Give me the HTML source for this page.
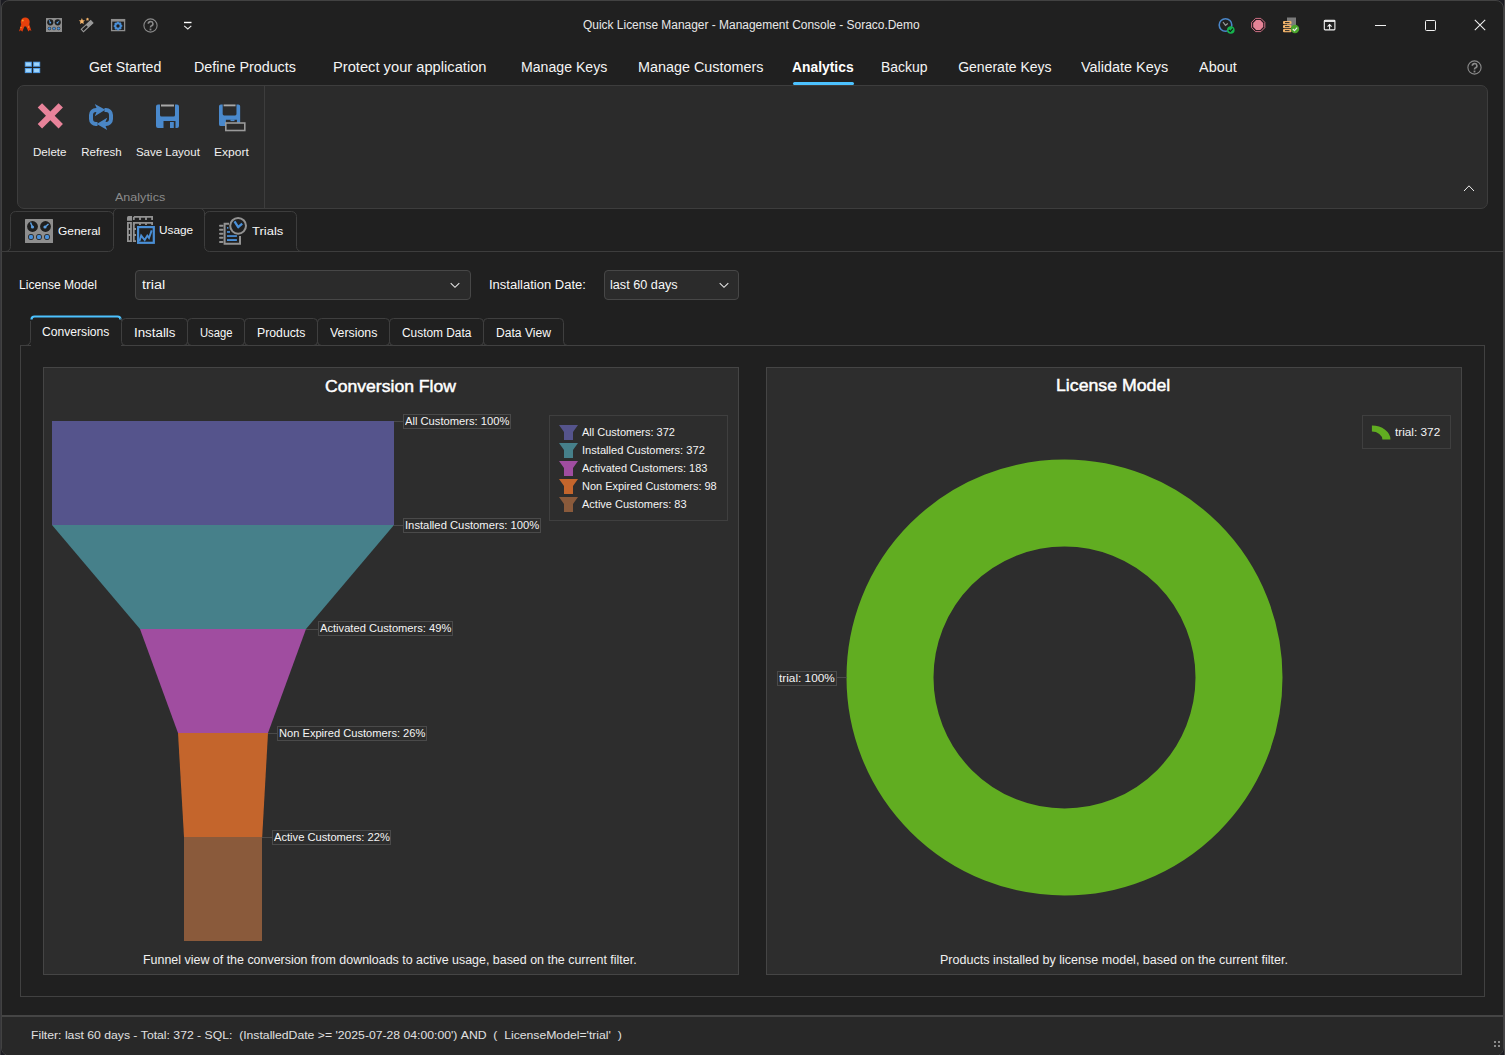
<!DOCTYPE html><html><head><meta charset="utf-8"><style>
html,body{margin:0;padding:0;background:#1c1c22;width:1505px;height:1055px;overflow:hidden;position:relative;}
.t{position:absolute;white-space:pre;font-family:"Liberation Sans",sans-serif;transform-origin:0 0;}
svg{overflow:visible}
</style></head><body>
<div style="position:absolute;left:0px;top:0px;width:1px;height:1055px;box-sizing:border-box;background:#38383b;"></div>
<div style="position:absolute;left:1504px;top:0px;width:1px;height:1055px;box-sizing:border-box;background:#464446;"></div>
<div style="position:absolute;left:1px;top:0px;width:1503px;height:1056px;box-sizing:border-box;border:1px solid #424242;border-radius:8px;background:#202020;"></div>
<div class="t" style="left:583.2px;top:18.94px;font-size:12px;line-height:12px;color:#e8e8e8;transform:scaleX(0.9954);">Quick&#160;License&#160;Manager&#160;-&#160;Management&#160;Console&#160;-&#160;Soraco.Demo</div>
<div class="t" style="left:89.2px;top:60.05px;font-size:14px;line-height:14px;color:#f4f4f4;transform:scaleX(1.0099);">Get&#160;Started</div>
<div class="t" style="left:194.4px;top:60.05px;font-size:14px;line-height:14px;color:#f4f4f4;transform:scaleX(1.0230);">Define&#160;Products</div>
<div class="t" style="left:333.1px;top:60.05px;font-size:14px;line-height:14px;color:#f4f4f4;transform:scaleX(1.0492);">Protect&#160;your&#160;application</div>
<div class="t" style="left:521.3px;top:60.05px;font-size:14px;line-height:14px;color:#f4f4f4;transform:scaleX(1.0081);">Manage&#160;Keys</div>
<div class="t" style="left:638.2px;top:60.05px;font-size:14px;line-height:14px;color:#f4f4f4;transform:scaleX(1.0273);">Manage&#160;Customers</div>
<div class="t" style="left:881.4px;top:60.05px;font-size:14px;line-height:14px;color:#f4f4f4;transform:scaleX(0.9958);">Backup</div>
<div class="t" style="left:958.2px;top:60.05px;font-size:14px;line-height:14px;color:#f4f4f4;">Generate&#160;Keys</div>
<div class="t" style="left:1081.3px;top:60.05px;font-size:14px;line-height:14px;color:#f4f4f4;transform:scaleX(1.0311);">Validate&#160;Keys</div>
<div class="t" style="left:1199px;top:60.05px;font-size:14px;line-height:14px;color:#f4f4f4;transform:scaleX(1.0332);">About</div>
<div class="t" style="left:792.4px;top:60.05px;font-size:14px;line-height:14px;color:#ffffff;font-weight:bold;transform:scaleX(0.9896);">Analytics</div>
<div style="position:absolute;left:793px;top:82px;width:61px;height:3px;box-sizing:border-box;background:#4cc2ff;border-radius:2px;"></div>
<div style="position:absolute;left:17px;top:85px;width:1471px;height:124px;box-sizing:border-box;border:1px solid #3d3d3d;border-radius:7px;background:#2b2b2b;"></div>
<div style="position:absolute;left:264px;top:86px;width:1px;height:122px;box-sizing:border-box;background:#3d3d3d;"></div>
<div class="t" style="left:33.3px;top:147.27px;font-size:11.5px;line-height:11.5px;color:#f0f0f0;transform:scaleX(1.0077);">Delete</div>
<div class="t" style="left:81.3px;top:147.27px;font-size:11.5px;line-height:11.5px;color:#f0f0f0;">Refresh</div>
<div class="t" style="left:135.9px;top:147.27px;font-size:11.5px;line-height:11.5px;color:#f0f0f0;">Save&#160;Layout</div>
<div class="t" style="left:214.3px;top:147.27px;font-size:11.5px;line-height:11.5px;color:#f0f0f0;transform:scaleX(1.0500);">Export</div>
<div class="t" style="left:115.2px;top:192.19px;font-size:11px;line-height:11px;color:#8a8a8a;transform:scaleX(1.1405);">Analytics</div>
<svg style="position:absolute;left:0px;top:200px" width="1505" height="60" viewBox="0 0 1505 60"><g transform="translate(0,-200)" fill="none" stroke="#3d3d3d" stroke-width="1"><path d="M1,251.5 H108.5 M209.5,251.5 H1503"/><path d="M5.5,251.5 A5,5 0 0 0 10.5,246.5 V216.5 A5,5 0 0 1 15.5,211.5 H108.5 A5,5 0 0 1 113.5,216.5 V246.5 A5,5 0 0 1 108.5,251.5"/><path d="M113.5,216.5 V213 A4.5,4.5 0 0 1 118,208.5 H200 A4.5,4.5 0 0 1 204.5,213 V216.5"/><path d="M209.5,251.5 A5,5 0 0 1 204.5,246.5 V216.5 A5,5 0 0 1 209.5,211.5 H291.5 A5,5 0 0 1 296.5,216.5 V246.5 A5,5 0 0 0 301.5,251.5"/></g></svg>
<div class="t" style="left:57.8px;top:226.27px;font-size:11.5px;line-height:11.5px;color:#f8f8f8;transform:scaleX(1.0388);">General</div>
<div class="t" style="left:159.2px;top:225.27px;font-size:11.5px;line-height:11.5px;color:#f8f8f8;transform:scaleX(1.0288);">Usage</div>
<div class="t" style="left:252.2px;top:226.27px;font-size:11.5px;line-height:11.5px;color:#f8f8f8;transform:scaleX(1.1306);">Trials</div>
<div class="t" style="left:19.3px;top:279.14px;font-size:12px;line-height:12px;color:#f8f8f8;transform:scaleX(1.0067);">License&#160;Model</div>
<div style="position:absolute;left:135px;top:270px;width:336px;height:30px;box-sizing:border-box;border:1px solid #474747;border-radius:4px;background:#2b2b2b;"></div>
<div class="t" style="left:141.9px;top:279.14px;font-size:12px;line-height:12px;color:#f8f8f8;transform:scaleX(1.2050);">trial</div>
<div class="t" style="left:488.7px;top:279.14px;font-size:12px;line-height:12px;color:#f8f8f8;transform:scaleX(1.0841);">Installation&#160;Date:</div>
<div style="position:absolute;left:604px;top:270px;width:135px;height:30px;box-sizing:border-box;border:1px solid #474747;border-radius:4px;background:#2b2b2b;"></div>
<div class="t" style="left:610.3px;top:279.14px;font-size:12px;line-height:12px;color:#f8f8f8;transform:scaleX(1.0556);">last&#160;60&#160;days</div>
<div style="position:absolute;left:20px;top:345px;width:1465px;height:652px;box-sizing:border-box;border:1px solid #414141;background:#202020;"></div>
<div style="position:absolute;left:31px;top:344px;width:90px;height:3px;box-sizing:border-box;background:#202020;"></div>
<svg style="position:absolute;left:0px;top:300px" width="600" height="60" viewBox="0 0 600 60"><g transform="translate(0,-300)" fill="none" stroke="#3f3f3f" stroke-width="1"><path d="M121.5,341.5 V322.5 A4,4 0 0 1 125.5,318.5 H183.5 A4,4 0 0 1 187.5,322.5 V341.5 M187.5,341.5 V322.5 A4,4 0 0 1 191.5,318.5 H240.5 A4,4 0 0 1 244.5,322.5 V341.5 M244.5,341.5 V322.5 A4,4 0 0 1 248.5,318.5 H313.5 A4,4 0 0 1 317.5,322.5 V341.5 M317.5,341.5 V322.5 A4,4 0 0 1 321.5,318.5 H385.5 A4,4 0 0 1 389.5,322.5 V341.5 M389.5,341.5 V322.5 A4,4 0 0 1 393.5,318.5 H479.5 A4,4 0 0 1 483.5,322.5 V341.5 M483.5,341.5 V322.5 A4,4 0 0 1 487.5,318.5 H559.5 A4,4 0 0 1 563.5,322.5 V341.5 M183.5,345.5 A4,4 0 0 0 187.5,341.5 A4,4 0 0 0 191.5,345.5 M240.5,345.5 A4,4 0 0 0 244.5,341.5 A4,4 0 0 0 248.5,345.5 M313.5,345.5 A4,4 0 0 0 317.5,341.5 A4,4 0 0 0 321.5,345.5 M385.5,345.5 A4,4 0 0 0 389.5,341.5 A4,4 0 0 0 393.5,345.5 M479.5,345.5 A4,4 0 0 0 483.5,341.5 A4,4 0 0 0 487.5,345.5 M121.5,341.5 A4,4 0 0 0 125.5,345.5 M563.5,341.5 A4,4 0 0 0 567.5,345.5"/><path d="M20,345.5 H25.5 A5,5 0 0 0 30.5,340.5 V321"/></g><g transform="translate(0,-300)"><path d="M31.5,319.5 A3,3 0 0 1 34.5,316.5 H117.5 A3,3 0 0 1 120.5,319.5" fill="none" stroke="#4cc2ff" stroke-width="2.2"/><path d="M120.5,318.5 A3,3 0 0 1 121.5,321" fill="none" stroke="#3f3f3f" stroke-width="1"/></g></svg>
<div class="t" style="left:42.3px;top:325.94px;font-size:12px;line-height:12px;color:#f8f8f8;transform:scaleX(1.0105);">Conversions</div>
<div class="t" style="left:134.2px;top:326.64px;font-size:12px;line-height:12px;color:#f8f8f8;transform:scaleX(1.1112);">Installs</div>
<div class="t" style="left:200.4px;top:326.64px;font-size:12px;line-height:12px;color:#f8f8f8;transform:scaleX(0.9369);">Usage</div>
<div class="t" style="left:257.2px;top:326.64px;font-size:12px;line-height:12px;color:#f8f8f8;transform:scaleX(1.0220);">Products</div>
<div class="t" style="left:329.9px;top:326.64px;font-size:12px;line-height:12px;color:#f8f8f8;transform:scaleX(1.0298);">Versions</div>
<div class="t" style="left:402px;top:326.64px;font-size:12px;line-height:12px;color:#f8f8f8;transform:scaleX(0.9911);">Custom&#160;Data</div>
<div class="t" style="left:496.3px;top:326.64px;font-size:12px;line-height:12px;color:#f8f8f8;transform:scaleX(1.0078);">Data&#160;View</div>
<div style="position:absolute;left:43px;top:367px;width:696px;height:608px;box-sizing:border-box;border:1px solid #454545;background:#2d2d2d;"></div>
<div style="position:absolute;left:766px;top:367px;width:696px;height:608px;box-sizing:border-box;border:1px solid #454545;background:#2d2d2d;"></div>
<div class="t" style="left:325px;top:378.23px;font-size:16.5px;line-height:16.5px;color:#ffffff;transform:scaleX(1.0660);-webkit-text-stroke:0.45px #ffffff;">Conversion&#160;Flow</div>
<div class="t" style="left:1056px;top:377.23px;font-size:16.5px;line-height:16.5px;color:#ffffff;transform:scaleX(1.0733);-webkit-text-stroke:0.45px #ffffff;">License&#160;Model</div>
<svg style="position:absolute;left:43px;top:367px" width="696" height="608" viewBox="0 0 696 608">
<g transform="translate(-43,-367)">
<rect x="52" y="421" width="342" height="104" fill="#55548c"/>
<polygon points="52,525 394,525 306,629 140,629" fill="#46808a"/>
<polygon points="140,629 306,629 268,733 178,733" fill="#a04da0"/>
<polygon points="178,733 268,733 262.2,837 184,837" fill="#c4652c"/>
<rect x="184" y="837" width="78" height="104" fill="#8a5a3b"/>
</g></svg>
<div style="position:absolute;left:403px;top:413.5px;width:108px;height:15.0px;box-sizing:border-box;border:1px solid #4a4a4a;"></div>
<div style="position:absolute;left:394px;top:421px;width:9px;height:1px;box-sizing:border-box;background:#4a4a4a;"></div>
<div class="t" style="left:405.3px;top:415.73px;font-size:11.3px;line-height:11.3px;color:#f4f4f4;transform:scaleX(0.9895);">All&#160;Customers:&#160;100%</div>
<div style="position:absolute;left:403px;top:517.5px;width:138px;height:15.0px;box-sizing:border-box;border:1px solid #4a4a4a;"></div>
<div style="position:absolute;left:394px;top:525px;width:9px;height:1px;box-sizing:border-box;background:#4a4a4a;"></div>
<div class="t" style="left:405.3px;top:519.73px;font-size:11.3px;line-height:11.3px;color:#f4f4f4;transform:scaleX(0.9953);">Installed&#160;Customers:&#160;100%</div>
<div style="position:absolute;left:318px;top:621px;width:135px;height:15px;box-sizing:border-box;border:1px solid #4a4a4a;"></div>
<div style="position:absolute;left:306px;top:629px;width:12px;height:1px;box-sizing:border-box;background:#4a4a4a;"></div>
<div class="t" style="left:320.3px;top:623.23px;font-size:11.3px;line-height:11.3px;color:#f4f4f4;transform:scaleX(0.9869);">Activated&#160;Customers:&#160;49%</div>
<div style="position:absolute;left:277px;top:725.5px;width:150px;height:15.0px;box-sizing:border-box;border:1px solid #4a4a4a;"></div>
<div style="position:absolute;left:268px;top:733px;width:9px;height:1px;box-sizing:border-box;background:#4a4a4a;"></div>
<div class="t" style="left:279.3px;top:727.73px;font-size:11.3px;line-height:11.3px;color:#f4f4f4;transform:scaleX(0.9835);">Non&#160;Expired&#160;Customers:&#160;26%</div>
<div style="position:absolute;left:271.5px;top:829.5px;width:119.5px;height:15.0px;box-sizing:border-box;border:1px solid #4a4a4a;"></div>
<div style="position:absolute;left:262px;top:837px;width:9.5px;height:1px;box-sizing:border-box;background:#4a4a4a;"></div>
<div class="t" style="left:273.8px;top:831.73px;font-size:11.3px;line-height:11.3px;color:#f4f4f4;transform:scaleX(0.9869);">Active&#160;Customers:&#160;22%</div>
<div style="position:absolute;left:549px;top:415px;width:179px;height:106px;box-sizing:border-box;border:1px solid #3f3f3f;"></div>
<svg style="position:absolute;left:559px;top:425px" width="19" height="15" viewBox="0 0 19 15"><path d="M0,0 H19 L14,7 V15 H5 V7 Z" fill="#55548c"/></svg>
<div class="t" style="left:582px;top:426.59px;font-size:11px;line-height:11px;color:#f4f4f4;">All&#160;Customers:&#160;372</div>
<svg style="position:absolute;left:559px;top:443px" width="19" height="15" viewBox="0 0 19 15"><path d="M0,0 H19 L14,7 V15 H5 V7 Z" fill="#46808a"/></svg>
<div class="t" style="left:582px;top:444.59px;font-size:11px;line-height:11px;color:#f4f4f4;transform:scaleX(1.0093);">Installed&#160;Customers:&#160;372</div>
<svg style="position:absolute;left:559px;top:461px" width="19" height="15" viewBox="0 0 19 15"><path d="M0,0 H19 L14,7 V15 H5 V7 Z" fill="#a04da0"/></svg>
<div class="t" style="left:582px;top:462.59px;font-size:11px;line-height:11px;color:#f4f4f4;transform:scaleX(0.9956);">Activated&#160;Customers:&#160;183</div>
<svg style="position:absolute;left:559px;top:479px" width="19" height="15" viewBox="0 0 19 15"><path d="M0,0 H19 L14,7 V15 H5 V7 Z" fill="#c4652c"/></svg>
<div class="t" style="left:582px;top:480.59px;font-size:11px;line-height:11px;color:#f4f4f4;transform:scaleX(0.9969);">Non&#160;Expired&#160;Customers:&#160;98</div>
<svg style="position:absolute;left:559px;top:497px" width="19" height="15" viewBox="0 0 19 15"><path d="M0,0 H19 L14,7 V15 H5 V7 Z" fill="#8a5a3b"/></svg>
<div class="t" style="left:582px;top:498.59px;font-size:11px;line-height:11px;color:#f4f4f4;">Active&#160;Customers:&#160;83</div>
<svg style="position:absolute;left:766px;top:367px" width="696" height="608" viewBox="0 0 696 608"><circle cx="298.5" cy="310.5" r="174.5" fill="none" stroke="#61ad21" stroke-width="87"/></svg>
<div style="position:absolute;left:776.5px;top:670.5px;width:60px;height:15px;box-sizing:border-box;border:1px solid #4a4a4a;"></div>
<div style="position:absolute;left:836.5px;top:677px;width:10px;height:1px;box-sizing:border-box;background:#4a4a4a;"></div>
<div class="t" style="left:779px;top:673.03px;font-size:11.3px;line-height:11.3px;color:#f4f4f4;transform:scaleX(1.0452);">trial:&#160;100%</div>
<div style="position:absolute;left:1362px;top:415px;width:88.5px;height:34px;box-sizing:border-box;border:1px solid #3f3f3f;"></div>
<svg style="position:absolute;left:1371px;top:425px" width="21" height="16" viewBox="0 0 21 16"><path d="M0.9,0.6 A18.6,14 0 0 1 19.5,14.6 L11.4,14.6 A10.5,8.1 0 0 0 0.9,6.6 Z" fill="#61ad21"/></svg>
<div class="t" style="left:1394.8px;top:427.47px;font-size:11.5px;line-height:11.5px;color:#f4f4f4;transform:scaleX(1.0247);">trial:&#160;372</div>
<div class="t" style="left:143.2px;top:954.34px;font-size:12px;line-height:12px;color:#f0f0f0;transform:scaleX(1.0364);">Funnel&#160;view&#160;of&#160;the&#160;conversion&#160;from&#160;downloads&#160;to&#160;active&#160;usage,&#160;based&#160;on&#160;the&#160;current&#160;filter.</div>
<div class="t" style="left:939.6px;top:954.04px;font-size:12px;line-height:12px;color:#f0f0f0;transform:scaleX(1.0452);">Products&#160;installed&#160;by&#160;license&#160;model,&#160;based&#160;on&#160;the&#160;current&#160;filter.</div>
<svg style="position:absolute;left:17px;top:16px" width="16" height="17" viewBox="0 0 16 17"><g transform="translate(-17,-16)"><polygon points="21.3,24 24.8,25.5 22.3,31.8 20.8,30.3 19,31.5" fill="#e53c0b"/><polygon points="29.2,24 25.7,25.5 28.4,31.5 29.8,30 31.4,31" fill="#e53c0b"/><circle cx="25.2" cy="22" r="4.5" fill="#e8400c"/><circle cx="22.8" cy="20.5" r="0.9" fill="#f7a030"/><circle cx="21" cy="27.5" r="0.7" fill="#f7a030"/><circle cx="28.5" cy="27" r="0.7" fill="#f7a030"/></g></svg>
<svg style="position:absolute;left:46px;top:18px" width="16" height="14" viewBox="0 0 16 14"><g transform="scale(0.5714,0.5833)"><rect x="0" y="0" width="28" height="24" rx="0.5" fill="#8e8e8e"/><circle cx="7.5" cy="7.5" r="5.4" fill="#1e1e1e"/><circle cx="20.5" cy="7.5" r="5.4" fill="#1e1e1e"/><path d="M5.5,3.5 L7.5,8" stroke="#5a9ee0" stroke-width="1.5"/><circle cx="7.5" cy="8" r="1.6" fill="#5a9ee0"/><path d="M23.5,5 L20,8" stroke="#5a9ee0" stroke-width="1.5"/><circle cx="20" cy="8" r="1.6" fill="#5a9ee0"/><circle cx="6" cy="18" r="2.9" fill="#1e1e1e"/><circle cx="14" cy="18" r="2.9" fill="#1e1e1e"/><circle cx="22" cy="18" r="2.9" fill="#1e1e1e"/><circle cx="6" cy="18" r="2.2" fill="#4a90d9"/><circle cx="14" cy="18" r="2.2" fill="#4a90d9"/><circle cx="22" cy="18" r="2.2" fill="#4a90d9"/></g></svg>
<svg style="position:absolute;left:70px;top:12px" width="30" height="26" viewBox="0 0 30 26"><g transform="translate(-70,-12)"><polygon points="81.90,18.10 82.78,20.19 85.04,20.38 83.33,21.86 83.84,24.07 81.90,22.90 79.96,24.07 80.47,21.86 78.76,20.38 81.02,20.19" fill="#f5b56c"/><polygon points="87.50,17.40 88.03,18.57 89.31,18.71 88.36,19.58 88.62,20.84 87.50,20.20 86.38,20.84 86.64,19.58 85.69,18.71 86.97,18.57" fill="#f5b56c"/><g transform="rotate(-43 87 26)"><rect x="80.5" y="24.5" width="13" height="3.3" fill="none" stroke="#9a9a9a" stroke-width="1"/><rect x="87" y="24.5" width="6.5" height="3.3" fill="#9a9a9a"/></g></g></svg>
<svg style="position:absolute;left:105px;top:12px" width="26" height="26" viewBox="0 0 26 26"><g transform="translate(-105,-12)"><rect x="111.6" y="19.6" width="13" height="11" fill="none" stroke="#8e8e8e" stroke-width="1.3"/><rect x="111" y="19" width="14" height="2.6" fill="#8e8e8e"/><g transform="translate(118,26)"><circle r="2.7" fill="none" stroke="#4a90d9" stroke-width="2"/><rect x="-0.9" y="-4.3" width="1.6" height="1.8" transform="rotate(0)" fill="#4a90d9"/><rect x="-0.9" y="-4.3" width="1.6" height="1.8" transform="rotate(45)" fill="#4a90d9"/><rect x="-0.9" y="-4.3" width="1.6" height="1.8" transform="rotate(90)" fill="#4a90d9"/><rect x="-0.9" y="-4.3" width="1.6" height="1.8" transform="rotate(135)" fill="#4a90d9"/><rect x="-0.9" y="-4.3" width="1.6" height="1.8" transform="rotate(180)" fill="#4a90d9"/><rect x="-0.9" y="-4.3" width="1.6" height="1.8" transform="rotate(225)" fill="#4a90d9"/><rect x="-0.9" y="-4.3" width="1.6" height="1.8" transform="rotate(270)" fill="#4a90d9"/><rect x="-0.9" y="-4.3" width="1.6" height="1.8" transform="rotate(315)" fill="#4a90d9"/></g></g></svg>
<svg style="position:absolute;left:142.5px;top:17.5px" width="15" height="15" viewBox="0 0 15 15"><circle cx="7.5" cy="7.5" r="6.6" fill="none" stroke="#8a8a8a" stroke-width="1.1"/><path d="M5.3,5.8 A2.3,2.2 0 1 1 8.2,7.9 C7.5,8.3 7.5,8.7 7.5,9.6" fill="none" stroke="#8a8a8a" stroke-width="1.6"/><rect x="6.6" y="10.6" width="1.8" height="1.8" fill="#8a8a8a"/></svg>
<svg style="position:absolute;left:183px;top:21px" width="10" height="9" viewBox="0 0 10 9"><rect x="1" y="0.8" width="7.5" height="1.4" fill="#ffffff"/><path d="M1.2,4.8 L4.8,8 L8.3,4.8" fill="none" stroke="#e8e8e8" stroke-width="1.1"/></svg>
<svg style="position:absolute;left:1218px;top:17px" width="19" height="17" viewBox="0 0 19 17"><circle cx="7.5" cy="8" r="6.3" fill="none" stroke="#4a86c8" stroke-width="1.6"/><path d="M5,5 L7.5,8.3 L9.8,6.5" fill="none" stroke="#9a9a9a" stroke-width="1.2"/><circle cx="12.8" cy="13" r="3.8" fill="#16b24e"/><path d="M10.8,13 L12.3,14.5 L14.9,11.6" fill="none" stroke="#111" stroke-width="1.1"/></svg>
<svg style="position:absolute;left:1250px;top:17px" width="17" height="17" viewBox="0 0 17 17"><polygon points="5.5,1.4 10.9,1.4 14.8,5.3 14.8,10.7 10.9,14.6 5.5,14.6 1.6,10.7 1.6,5.3" fill="#2a1a20" stroke="#e07a8f" stroke-width="0.9"/><polygon points="6.1,3 10.3,3 13.2,5.9 13.2,10.1 10.3,13 6.1,13 3.2,10.1 3.2,5.9" fill="#e68497"/></svg>
<svg style="position:absolute;left:1282px;top:17px" width="18" height="17" viewBox="0 0 18 17"><rect x="5" y="0.5" width="9" height="10" fill="#7a7a7a"/><rect x="1" y="4" width="8.5" height="3.2" rx="1" fill="#f2b36a"/><rect x="1" y="8" width="8.5" height="3.2" rx="1" fill="#f2b36a"/><rect x="1" y="12" width="8.5" height="3.2" rx="1" fill="#f2b36a"/><rect x="3" y="5.1" width="4.5" height="1" fill="#2a2a2a"/><rect x="3" y="9.1" width="4.5" height="1" fill="#2a2a2a"/><rect x="3" y="13.1" width="4.5" height="1" fill="#2a2a2a"/><circle cx="13" cy="12" r="4.2" fill="#4aa52c"/><path d="M10.8,12 L12.5,13.7 L15.2,10.6" fill="none" stroke="#eaeaea" stroke-width="1.2"/></svg>
<svg style="position:absolute;left:1323px;top:19px" width="13" height="12" viewBox="0 0 13 12"><rect x="1.3" y="1.3" width="10.6" height="9.6" rx="0.8" fill="none" stroke="#f4f4f4" stroke-width="1.1"/><rect x="1.3" y="1.3" width="10.6" height="1.6" fill="#f4f4f4"/><path d="M6.6,10.5 V5.6 M4.6,7.6 L6.6,5.6 L8.6,7.6" fill="none" stroke="#f4f4f4" stroke-width="1.05"/></svg>
<div style="position:absolute;left:1374.5px;top:25px;width:11px;height:1px;box-sizing:border-box;background:#f0f0f0;"></div>
<div style="position:absolute;left:1425px;top:20px;width:10.5px;height:10.5px;box-sizing:border-box;border:1px solid #f0f0f0;border-radius:1.5px;"></div>
<svg style="position:absolute;left:1474px;top:19px" width="12" height="12" viewBox="0 0 12 12"><path d="M0.8,0.8 L11.2,11.2 M11.2,0.8 L0.8,11.2" stroke="#f0f0f0" stroke-width="1.05"/></svg>
<svg style="position:absolute;left:24px;top:61px" width="18" height="13" viewBox="0 0 18 13"><rect x="0.8" y="0.7" width="7.1" height="5.1" fill="#4f9be6"/><rect x="1.8" y="1.6" width="5.1" height="3.2" fill="#9ed4fb"/><rect x="9.1" y="0.7" width="7.1" height="5.1" fill="#4f9be6"/><rect x="10.1" y="1.6" width="5.1" height="3.2" fill="#9ed4fb"/><rect x="0.8" y="7.0" width="7.1" height="5.1" fill="#4f9be6"/><rect x="1.8" y="7.9" width="5.1" height="3.2" fill="#9ed4fb"/><rect x="9.1" y="7.0" width="7.1" height="5.1" fill="#4f9be6"/><rect x="10.1" y="7.9" width="5.1" height="3.2" fill="#9ed4fb"/></svg>
<svg style="position:absolute;left:1466.5px;top:59.6px" width="15" height="15" viewBox="0 0 15 15"><circle cx="7.5" cy="7.5" r="6.6" fill="none" stroke="#8a8a8a" stroke-width="1.1"/><path d="M5.3,5.8 A2.3,2.2 0 1 1 8.2,7.9 C7.5,8.3 7.5,8.7 7.5,9.6" fill="none" stroke="#8a8a8a" stroke-width="1.6"/><rect x="6.6" y="10.6" width="1.8" height="1.8" fill="#8a8a8a"/></svg>
<svg style="position:absolute;left:37.8px;top:103.3px" width="26" height="26" viewBox="0 0 26 26"><path d="M4,0.5 L12.5,9 L21,0.5 L25.5,5 L17,13.5 L25.5,22 L21,26.5 L12.5,18 L4,26.5 L-0.5,22 L8,13.5 L-0.5,5 Z" fill="#e8839a" transform="translate(0.2,-0.3) scale(0.97)"/></svg>
<svg style="position:absolute;left:88px;top:103px" width="26" height="28" viewBox="0 0 26 28"><path d="M10,7 H8 A5,5 0 0 0 3,12 V16 A5,5 0 0 0 8,21 H9.5" fill="none" stroke="#4a86c5" stroke-width="4"/><path d="M16,21 H18 A5,5 0 0 0 23,16 V12 A5,5 0 0 0 18,7 H16.5" fill="none" stroke="#4a86c5" stroke-width="4"/><polygon points="6.8,1 17.3,6.8 6.8,13.3 9.3,6.8" fill="#4a86c5"/><polygon points="19.2,14.8 8.7,21 19.2,27 16.7,21" fill="#4a86c5"/></svg>
<svg style="position:absolute;left:155.8px;top:103.6px" width="28" height="28" viewBox="0 0 28 28"><path d="M2,0.5 H4 V11 Q4,12.5 5.5,12.5 H17.5 Q19,12.5 19,11 V0.5 H21 Q23,0.5 23,2.5 V22 Q23,24 21,24 H19.5 V17 H7.5 V24 H2 Q0,24 0,22 V2.5 Q0,0.5 2,0.5 Z" fill="#4a89cc"/><rect x="5" y="0.5" width="13" height="2" fill="#a8a8a8"/><rect x="14" y="18" width="3.8" height="6" fill="#4a89cc"/></svg>
<svg style="position:absolute;left:218.8px;top:104px" width="28" height="28" viewBox="0 0 28 28"><g transform="scale(0.92,0.92)"><path d="M2,0.5 H4 V11 Q4,12.5 5.5,12.5 H17.5 Q19,12.5 19,11 V0.5 H21 Q23,0.5 23,2.5 V22 Q23,24 21,24 H19.5 V17 H7.5 V24 H2 Q0,24 0,22 V2.5 Q0,0.5 2,0.5 Z" fill="#4a89cc"/><rect x="5" y="0.5" width="13" height="2" fill="#a8a8a8"/></g><rect x="6.8" y="19" width="19" height="7.5" fill="#2b2b2b" stroke="#9a9a9a" stroke-width="1.6"/><rect x="11.5" y="15.5" width="4" height="1.6" fill="#4a89cc"/></svg>
<svg style="position:absolute;left:1463px;top:184px" width="12" height="8" viewBox="0 0 12 8"><path d="M1,7 L6,1.8 L11,7" fill="none" stroke="#f0f0f0" stroke-width="1"/></svg>
<svg style="position:absolute;left:25px;top:219px" width="28" height="24" viewBox="0 0 28 24"><g transform="scale(1.0000,1.0000)"><rect x="0" y="0" width="28" height="24" rx="0.5" fill="#8e8e8e"/><circle cx="7.5" cy="7.5" r="5.4" fill="#1e1e1e"/><circle cx="20.5" cy="7.5" r="5.4" fill="#1e1e1e"/><path d="M5.5,3.5 L7.5,8" stroke="#5a9ee0" stroke-width="1.5"/><circle cx="7.5" cy="8" r="1.6" fill="#5a9ee0"/><path d="M23.5,5 L20,8" stroke="#5a9ee0" stroke-width="1.5"/><circle cx="20" cy="8" r="1.6" fill="#5a9ee0"/><circle cx="6" cy="18" r="2.9" fill="#1e1e1e"/><circle cx="14" cy="18" r="2.9" fill="#1e1e1e"/><circle cx="22" cy="18" r="2.9" fill="#1e1e1e"/><circle cx="6" cy="18" r="2.2" fill="#4a90d9"/><circle cx="14" cy="18" r="2.2" fill="#4a90d9"/><circle cx="22" cy="18" r="2.2" fill="#4a90d9"/></g></svg>
<svg style="position:absolute;left:126px;top:215px" width="30" height="30" viewBox="0 0 30 30"><path d="M1,5.7 V2.5 Q1,1 2.5,1 H6 V5.7 Z" fill="#929292"/><g fill="none" stroke="#929292" stroke-width="1.8"><path d="M7.8,1.9 H26.1 V5 M7.8,1.9 V5 M14,1.9 V5 M20,1.9 V5"/><path d="M7.8,10 V7.8 H26.1 V10 M14,7.8 V10 M20,7.8 V10"/><path d="M1.9,7.8 H5 V26.1 H1.9 Z M1.9,14 H5 M1.9,20 H5"/><path d="M7.8,7.8 V26.1 H10 M7.8,14 H10 M7.8,20 H10"/></g><rect x="12.1" y="12.1" width="15.7" height="15.7" fill="#202020" stroke="#4a8fd6" stroke-width="2.2"/><path d="M13.4,26.2 L15.2,20.6 L18.7,25 L21.3,20.6 L23,22.9 L25.7,15.4" fill="none" stroke="#4a8fd6" stroke-width="1.9"/></svg>
<svg style="position:absolute;left:217px;top:214px" width="32" height="32" viewBox="0 0 32 32"><g fill="#929292"><rect x="2" y="10.8" width="4.5" height="2" rx="1"/><rect x="2" y="14.7" width="4.5" height="2" rx="1"/><rect x="2" y="18.8" width="4.5" height="2" rx="1"/><rect x="2" y="22.8" width="4.5" height="2" rx="1"/><rect x="2" y="26.9" width="4.5" height="2" rx="1"/></g><path d="M12,9.7 H7.6 V29.7 H23 V21.9" fill="none" stroke="#929292" stroke-width="2"/><g fill="#4a90d9"><rect x="10" y="13" width="1.4" height="1.7"/><rect x="10" y="17.1" width="3" height="1.7"/><rect x="10" y="21.2" width="9.9" height="1.7"/><rect x="10" y="25.1" width="9.9" height="1.9"/></g><circle cx="21.1" cy="11.8" r="7.9" fill="#202020" stroke="#929292" stroke-width="2"/><path d="M17.5,7.4 L21.2,13.2 L25.2,9.6" fill="none" stroke="#4a90d9" stroke-width="2.3" stroke-linejoin="round"/></svg>
<svg style="position:absolute;left:448.5px;top:281px" width="12" height="8" viewBox="0 0 12 8"><path d="M1.7,2.2 L6,6.3 L10.3,2.2" fill="none" stroke="#e8e8e8" stroke-width="1.05"/></svg>
<svg style="position:absolute;left:717.5px;top:281px" width="12" height="8" viewBox="0 0 12 8"><path d="M1.7,2.2 L6,6.3 L10.3,2.2" fill="none" stroke="#e8e8e8" stroke-width="1.05"/></svg>
<div style="position:absolute;left:2px;top:1015px;width:1501px;height:40px;box-sizing:border-box;background:#282828;border-top:2px solid #454545;border-radius:0 0 7px 7px;"></div>
<div class="t" style="left:31.3px;top:1029.91px;font-size:11.8px;line-height:11.8px;color:#e0e0e0;transform:scaleX(1.0340);">Filter:&#160;last&#160;60&#160;days&#160;-&#160;Total:&#160;372&#160;-&#160;SQL:&#160;&#160;(InstalledDate&#160;&gt;=&#160;'2025-07-28&#160;04:00:00')&#160;AND&#160;&#160;(&#160;&#160;LicenseModel='trial'&#160;&#160;)</div>
<svg style="position:absolute;left:1493px;top:1040px" width="8" height="8" viewBox="0 0 8 8"><g fill="#8a8a8a"><rect x="1" y="1" width="2" height="2"/><rect x="5" y="1" width="2" height="2"/><rect x="1" y="5" width="2" height="2"/><rect x="5" y="5" width="2" height="2"/></g></svg>
</body></html>
